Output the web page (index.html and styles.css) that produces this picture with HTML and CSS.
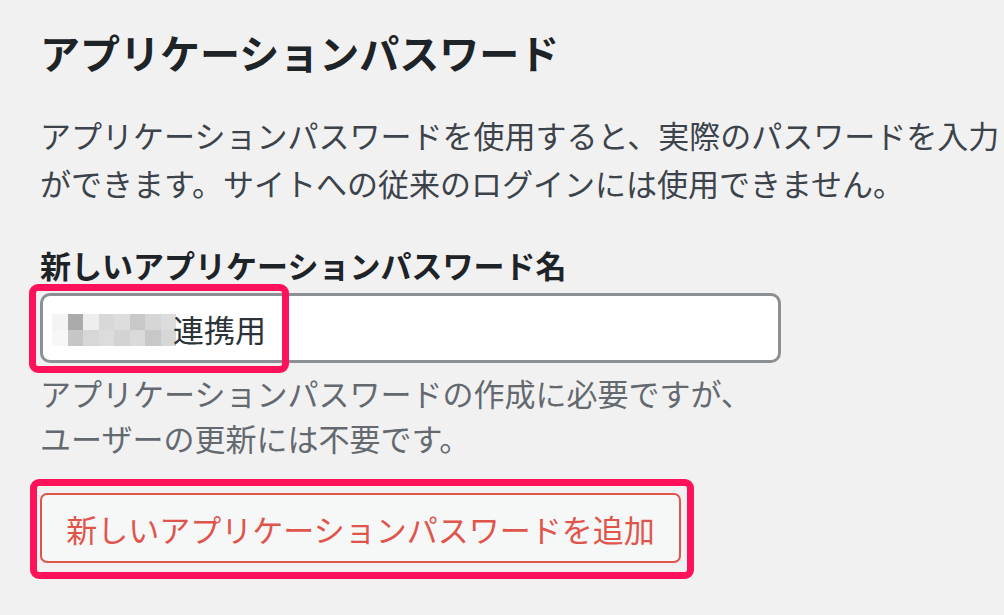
FILE: index.html
```html
<!DOCTYPE html>
<html lang="ja">
<head>
    <meta charset="UTF-8" />
    <meta name="viewport" content="width=device-width, initial-scale=1" />
    <title>アプリケーションパスワード</title>
    <link rel="stylesheet" href="styles.css">
</head>
<body>

    <div class="panel">
        <h2>アプリケーションパスワード</h2>

        <p class="intro">
            <span class="line">アプリケーションパスワードを使用すると、実際のパスワードを入力</span>
            <span class="line">ができます。サイトへの従来のログインには使用できません。</span>
        </p>

        <div class="field">
            <label for="appName">新しいアプリケーションパスワード名</label>
            <div class="input-wrap">
                <div class="name-input" id="appName">
                    <!-- ぼかし部分 -->
                    <span class="mosaic">
                        <i style="background:#f4f4f4"></i><i style="background:#ababab"></i><i style="background:#eeeeee"></i><i style="background:#d8d8d8"></i><i style="background:#dddddd"></i><i style="background:#c8c8c8"></i><i style="background:#d6d6d6"></i><i style="background:#dcdcdc"></i>
                        <i style="background:#f7f7f7"></i><i style="background:#c6c6c6"></i><i style="background:#d7d7d7"></i><i style="background:#dcdcdc"></i><i style="background:#d3d3d3"></i><i style="background:#dadada"></i><i style="background:#c8c8c8"></i><i style="background:#d7d7d7"></i>
                    </span>
                    <span class="value">連携用</span>
                </div>
                <span class="mark mark-input"></span>
            </div>
            <p class="help">アプリケーションパスワードの作成に必要ですが、<br>ユーザーの更新には不要です。</p>
        </div>

        <div class="button-wrap">
            <button type="button">新しいアプリケーションパスワードを追加</button>
            <span class="mark mark-button"></span>
        </div>
    </div>

</body>
</html>
```

FILE: styles.css
```css
* {
    margin: 0;
    padding: 0;
    box-sizing: border-box;
}
body {
    font-family: "Noto Sans CJK JP", "Noto Sans", sans-serif;
    background: #f1f1f1;
    color: #3c434a;
}
.panel {
    padding: 26px 0 36px 40px;
}
h2 {
    font-size: 40px;
    line-height: 52px;
    font-weight: 700;
    color: #1d2327;
}
.intro {
    margin-top: 33px;
    font-size: 31px;
    line-height: 48px;
    color: #3c434a;
    overflow: hidden;
}
.intro .line {
    display: block;
    white-space: nowrap;
}
.field {
    margin-top: 38px;
}
label {
    display: block;
    font-size: 31px;
    line-height: 40px;
    font-weight: 700;
    color: #1d2327;
}
.input-wrap {
    position: relative;
    margin-top: 8px;
    width: 741px;
}
.name-input {
    display: flex;
    align-items: center;
    height: 70px;
    padding-left: 9px;
    background: #fff;
    border: 3px solid #8c8f94;
    border-radius: 10px;
    font-size: 31px;
    color: #2c3338;
}
.mosaic {
    display: grid;
    grid-template-columns: repeat(8, 15.5px);
    grid-auto-rows: 16px;
    margin-top: 4px;
}
.mosaic i {
    display: block;
}
.value {
    margin-left: -3px;
}
.help {
    margin-top: 7px;
    font-size: 31px;
    line-height: 45px;
    color: #646970;
}
.button-wrap {
    position: relative;
    display: inline-block;
    margin-top: 33px;
}
button {
    display: block;
    width: 641px;
    height: 70px;
    font-family: inherit;
    font-size: 31px;
    color: #e0554b;
    background: #f6f7f7;
    border: 2px solid #e0554b;
    border-radius: 7px;
}
/* 強調枠 */
.mark {
    position: absolute;
    border: 7px solid #ff1259;
    border-radius: 9px;
    pointer-events: none;
}
.mark-input {
    left: -11px;
    top: -9px;
    width: 260px;
    height: 89px;
}
.mark-button {
    left: -10px;
    top: -14px;
    right: -13px;
    bottom: -16px;
}
```
